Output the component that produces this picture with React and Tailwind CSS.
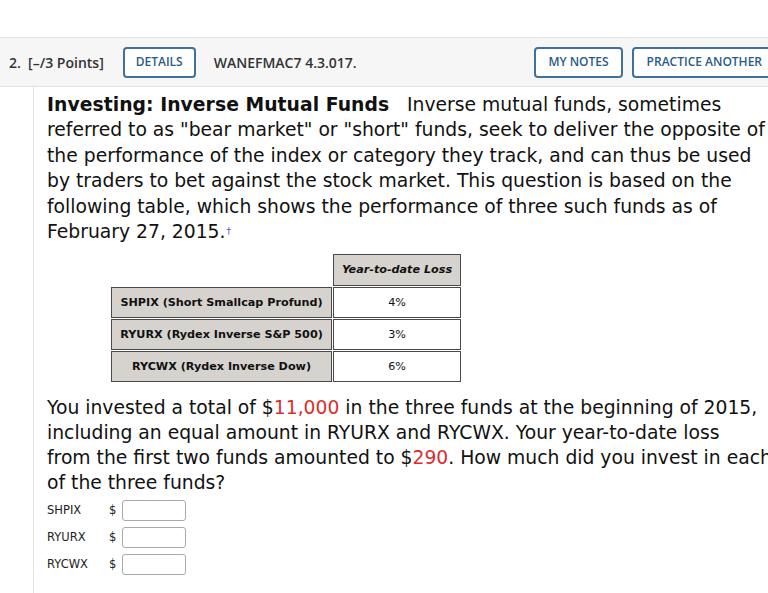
import React from "react";

const verd = { fontFamily: '"DejaVu Sans", Verdana, sans-serif' };

function Btn({ children, px = "px-[13px]" }) {
  return (
    <div className={"h-[31px] flex items-center border-2 border-[#40709c] rounded-[4px] text-[12px] font-semibold text-[#2b5a86] bg-white whitespace-nowrap " + px}>
      {children}
    </div>
  );
}

function Row({ label, value }) {
  return (
    <tr>
      <td className="border border-[#4a4a4a] bg-[#d6d3ce] h-[31px] text-center font-bold text-[11.2px] text-[#111] px-2">{label}</td>
      <td className="border border-[#4a4a4a] bg-white text-center text-[11.2px] text-[#111]">{value}</td>
    </tr>
  );
}

function Field({ label }) {
  return (
    <div className="flex items-center h-[27px]">
      <span className="w-[62px] text-[11.5px] text-[#222]" style={{ fontFamily: '"DejaVu Sans", sans-serif' }}>{label}</span>
      <span className="w-[13px] text-[11.5px] text-[#222]">$</span>
      <div className="w-[64px] h-[21px] border border-[#a9a9a9] rounded-[3px] bg-white" />
    </div>
  );
}

const Red = ({ children }) => <span className="text-[#d9302c]">{children}</span>;

export default function App() {
  return (
    <div className="w-[768px] h-[593px] overflow-hidden bg-white" style={{ fontFamily: '"Open Sans", sans-serif' }}>
      <div className="h-[37px]" />
      <div className="h-[50px] bg-[#f6f6f6] border-y border-[#e2e2e2] flex items-center">
        <span className="ml-[9px] text-[14px] font-semibold text-[#333] whitespace-nowrap">2.&nbsp; [–/3 Points]</span>
        <div className="ml-[19px]"><Btn px="px-[11px]">DETAILS</Btn></div>
        <span className="ml-[18px] text-[14px] font-semibold text-[#333] whitespace-nowrap">WANEFMAC7 4.3.017.</span>
        <div className="ml-auto flex gap-[9px] mr-[-9px]">
          <Btn px="px-[12px]">MY NOTES</Btn>
          <Btn>PRACTICE ANOTHER</Btn>
        </div>
      </div>
      <div className="ml-[33px] border-l border-[#e6e6e6] h-[506px] pl-[13px] pt-[5px]">
        <div className="w-[760px] text-[18.75px] text-[#111] whitespace-nowrap" style={verd}>
          <p className="leading-[25.4px]">
            <b className="tracking-[0.05px]">Investing: Inverse Mutual Funds</b>&nbsp;&nbsp; Inverse mutual funds, sometimes<br />
            referred to as "bear market" or "short" funds, seek to deliver the opposite of<br />
            the performance of the index or category they track, and can thus be used<br />
            by traders to bet against the stock market. This question is based on the<br />
            following table, which shows the performance of three such funds as of<br />
            February 27, 2015.<sup className="text-[9px] text-[#5050d0] ml-[1px]">†</sup>
          </p>
          <table className="ml-[63px] mt-[9px] border-separate border-spacing-[1px]" style={verd}>
            <tbody>
              <tr>
                <td className="w-[221px]" />
                <td className="w-[128px] h-[32px] border border-[#4a4a4a] bg-[#d6d3ce] text-center font-bold italic text-[11.2px] text-[#111]">Year-to-date Loss</td>
              </tr>
              <Row label="SHPIX (Short Smallcap Profund)" value="4%" />
              <Row label="RYURX (Rydex Inverse S&P 500)" value="3%" />
              <Row label="RYCWX (Rydex Inverse Dow)" value="6%" />
            </tbody>
          </table>
          <p className="mt-[12px] leading-[25px]">
            You invested a total of $<Red>11,000</Red> in the three funds at the beginning of 2015,<br />
            including an equal amount in RYURX and RYCWX. Your year-to-date loss<br />
            from the first two funds amounted to $<Red>290</Red>. How much did you invest in each<br />
            of the three funds?
          </p>
          <div className="mt-[2px]">
            <Field label="SHPIX" />
            <Field label="RYURX" />
            <Field label="RYCWX" />
          </div>
        </div>
      </div>
    </div>
  );
}
